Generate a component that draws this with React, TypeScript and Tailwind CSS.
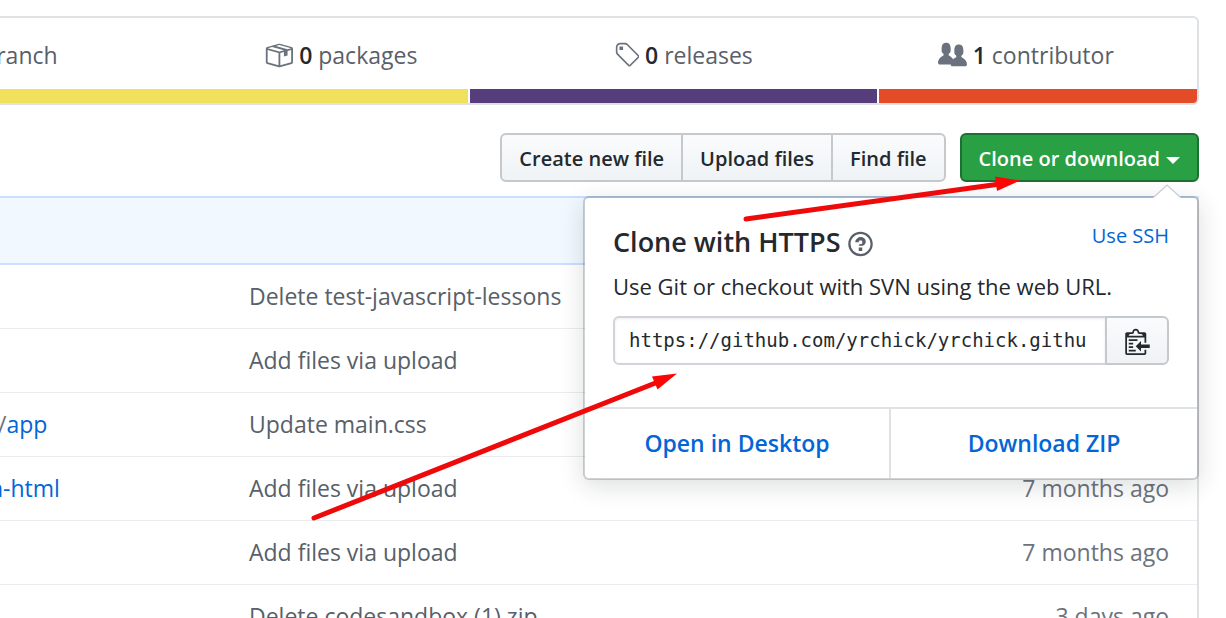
import React from "react";

const octicons = {
  package: {
    box: "0 0 16 16",
    d: "M1 4.27v7.47c0 .45.3.84.75.97l6.5 1.73c.16.05.34.05.5 0l6.5-1.73c.45-.13.75-.52.75-.97V4.27c0-.45-.3-.84-.75-.97l-6.5-1.74a1.4 1.4 0 0 0-.5 0L1.75 3.3c-.45.13-.75.52-.75.97zm7 9.09l-6-1.59V5l6 1.61v6.75zM2 4l2.5-.67L11 5.06l-2.5.67L2 4zm13 7.77l-6 1.59V6.61l2-.55V8.5l2-.53V5.53L15 5v6.77zm-2-7.24L6.5 2.8l2-.53L15 4l-2 .53z",
  },
  branch: {
    box: "0 0 10 16",
    d: "M10 5c0-1.11-.89-2-2-2a1.993 1.993 0 0 0-1 3.72v.3c-.02.52-.23.98-.63 1.38-.4.4-.86.61-1.38.63-.83.02-1.48.16-2 .45V4.72a1.993 1.993 0 0 0-1-3.72C.88 1 0 1.89 0 3a2 2 0 0 0 1 1.72v6.56c-.59.35-1 .99-1 1.72 0 1.11.89 2 2 2 1.11 0 2-.89 2-2 0-.53-.2-1-.53-1.36.09-.06.48-.41.59-.47.25-.11.56-.17.94-.17 1.05-.05 1.95-.45 2.75-1.25S8.95 7.77 9 6.73h-.02C9.59 6.37 10 5.73 10 5z",
  },
  tag: {
    box: "0 0 14 16",
    d: "M7.73 1.73C7.26 1.26 6.62 1 5.96 1H3.5C2.13 1 1 2.13 1 3.5v2.47c0 .66.27 1.3.73 1.77l6.06 6.06c.39.39 1.02.39 1.41 0l4.59-4.59a.996.996 0 0 0 0-1.41L7.73 1.73zM2.38 7.09c-.31-.3-.47-.7-.47-1.13V3.5c0-.88.72-1.59 1.59-1.59h2.47c.42 0 .83.16 1.13.47l6.14 6.13-4.73 4.73-6.13-6.15zM3.01 3h2v2H3V3h.01z",
  },
  people: {
    box: "0 0 16 16",
    d: "M16 12.999c0 .439-.45 1-1 1H7.995c-.539 0-.994-.447-.995-.999H1c-.54 0-1-.561-1-1 0-2.634 3-4 3-4s.229-.409 0-1c-.841-.621-1.058-.59-1-3 .058-2.419 1.367-3 2.5-3s2.442.58 2.5 3c.058 2.41-.159 2.379-1 3-.229.59 0 1 0 1s1.549.711 2.42 2.088C9.196 9.369 10 8.999 10 8.999s.229-.409 0-1c-.841-.62-1.058-.59-1-3 .058-2.419 1.367-3 2.5-3s2.437.581 2.495 3c.059 2.41-.158 2.38-1 3-.229.59 0 1 0 1s3.005 1.366 3.005 4",
  },
  question: {
    box: "0 0 14 16",
    d: "M6 10h2v2H6v-2zm4-3.5C10 8.64 8 9 8 9H6c0-.55.45-1 1-1h.5c.28 0 .5-.22.5-.5v-1c0-.28-.22-.5-.5-.5h-1c-.28 0-.5.22-.5.5V7H4c0-1.5 1.5-3 3-3s3 1 3 2.5zM7 2.3c3.14 0 5.7 2.56 5.7 5.7s-2.56 5.7-5.7 5.7A5.71 5.71 0 0 1 1.3 8c0-3.14 2.56-5.7 5.7-5.7zM7 1C3.14 1 0 4.14 0 8s3.14 7 7 7 7-3.14 7-7-3.14-7-7-7z",
  },
  clippy: {
    box: "0 0 14 16",
    d: "M2 13h4v1H2v-1zm5-6H2v1h5V7zm2 3V8l-3 3 3 3v-2h5v-2H9zM4.5 9H2v1h2.5V9zM2 12h2.5v-1H2v1zm9 1h1v2c-.02.28-.11.52-.3.7-.19.18-.42.28-.7.3H1c-.55 0-1-.45-1-1V4c0-.55.45-1 1-1h3c0-1.11.89-2 2-2 1.11 0 2 .89 2 2h3c.55 0 1 .45 1 1v5h-1V6H1v9h10v-2zM2 5h8c0-.55-.45-1-1-1H8c-.55 0-1-.45-1-1s-.45-1-1-1-1 .45-1 1-.45 1-1 1H3c-.55 0-1 .45-1 1z",
  },
};

function Octicon({ name, className }: { name: keyof typeof octicons; className: string }) {
  return (
    <svg viewBox={octicons[name].box} className={className} fill="currentColor" aria-hidden="true">
      <path fillRule="evenodd" d={octicons[name].d} />
    </svg>
  );
}

const stats: { icon: keyof typeof octicons; count: number; label: string }[] = [
  { icon: "branch", count: 1, label: "branch" },
  { icon: "package", count: 0, label: "packages" },
  { icon: "tag", count: 0, label: "releases" },
  { icon: "people", count: 1, label: "contributor" },
];

const files = [
  { name: "", message: "Delete test-javascript-lessons", age: "" },
  { name: "", message: "Add files via upload", age: "" },
  { name: "app", parent: "/", message: "Update main.css", age: "" },
  { name: "n-html", message: "Add files via upload", age: "7 months ago" },
  { name: "", message: "Add files via upload", age: "7 months ago" },
  { name: "", message: "Delete codesandbox (1).zip", age: "3 days ago" },
];

function Summary() {
  return (
    <section className="overflow-hidden rounded-r-md border-2 border-l-0 border-[#dfe2e5]">
      <ul className="-ml-[173px] grid grid-cols-4">
        {stats.map((s) => (
          <li key={s.label}>
            <a href="#" className="flex h-[71px] items-center justify-center gap-[6px] pt-1 text-[23px] text-[#586069]">
              <Octicon name={s.icon} className="h-[29px] w-auto text-[#6a737d]" />
              <span>
                <span className="font-semibold text-[#24292e]">{s.count}</span> {s.label}
              </span>
            </a>
          </li>
        ))}
      </ul>
      <div className="flex h-[14px] gap-[2px]">
        <span className="grow-[468] bg-[#f1e05a]" />
        <span className="grow-[407] bg-[#563d7c]" />
        <span className="grow-[318] bg-[#e34c26]" />
      </div>
    </section>
  );
}

function ClonePopover() {
  return (
    <div className="absolute top-[63px] right-0 z-10 w-[616px] rounded-md border-2 border-[#1b1f23]/20 bg-white bg-clip-padding font-normal shadow-[0_6px_24px_rgba(27,31,35,0.15)]">
      <svg className="absolute -top-[14px] right-[16px] h-[14px] w-[28px]" viewBox="0 0 28 14" aria-hidden="true">
        <path d="M0 14 14 1 28 14Z" fill="#fff" />
        <path d="M1 13 14 1 27 13" fill="none" stroke="#c9cdd1" strokeWidth="1.2" />
      </svg>
      <div className="px-[28px] pt-6 pb-[42px]">
        <div className="flex items-start justify-between">
          <h4 className="flex h-10 items-center gap-2 text-[27px] font-semibold">
            Clone with HTTPS
            <a href="#" aria-label="Which remote URL should I use?" className="pt-1 text-[#586069]">
              <Octicon name="question" className="h-[28px] w-[25px]" />
            </a>
          </h4>
          <button type="button" className="text-[20px] leading-7 text-[#0366d6]">
            Use SSH
          </button>
        </div>
        <p className="mt-2 text-[22px] leading-8">Use Git or checkout with SVN using the web URL.</p>
        <div className="mt-[14px] flex h-[49px]">
          <input
            type="text"
            readOnly
            aria-label="Clone this repository"
            defaultValue="https://github.com/yrchick/yrchick.githu"
            className="min-w-0 flex-1 rounded-l-md border-2 border-[#d1d5da] px-[14px] font-['DejaVu_Sans_Mono',monospace] text-[19px] shadow-[inset_0_1px_3px_rgba(27,31,35,0.08)] outline-none"
          />
          <button
            type="button"
            aria-label="Copy to clipboard"
            className="-ml-[2px] flex w-[64px] items-center justify-center rounded-r-md border-2 border-[#c6c9cc] bg-linear-to-b from-[#fafbfc] to-[#eff3f6]"
          >
            <Octicon name="clippy" className="h-[28px] w-[25px]" />
          </button>
        </div>
      </div>
      <div className="grid h-[71px] grid-cols-2 border-t-2 border-[#dfe2e5] text-[23px] font-semibold text-[#0366d6]">
        <a href="#" className="flex items-center justify-center border-r-2 border-[#dfe2e5]">
          Open in Desktop
        </a>
        <a href="#" className="flex items-center justify-center">
          Download ZIP
        </a>
      </div>
    </div>
  );
}

function Toolbar() {
  const button =
    "border-2 border-[#c6c9cc] bg-linear-to-b from-[#fafbfc] to-[#eff3f6] px-[17px] pt-[2px] whitespace-nowrap";
  return (
    <div className="relative mt-[28px] flex h-[49px] justify-end gap-[14px] text-[20px] font-semibold">
      <div className="flex">
        <button type="button" className={`${button} rounded-l-md`}>
          Create new file
        </button>
        <button type="button" className={`${button} -ml-[2px]`}>
          Upload files
        </button>
        <button type="button" className={`${button} -ml-[2px] rounded-r-md`}>
          Find file
        </button>
      </div>
      <button
        type="button"
        className="flex items-center gap-[6px] rounded-md border-2 border-[#1f6f33] bg-[#28a043] px-[17px] pt-[2px] whitespace-nowrap text-white"
      >
        Clone or download
        <svg viewBox="0 0 14 7" className="mt-1 h-[7px] w-[14px]" fill="currentColor" aria-hidden="true">
          <path d="M0 0h14L7 7z" />
        </svg>
      </button>
      <ClonePopover />
    </div>
  );
}

function FileTable() {
  return (
    <section className="mt-[14px] border-r-2 border-[#dfe2e5]">
      <div className="h-[69px] border-y-2 border-[#c8e1ff] bg-[#f1f8ff]" />
      <table className="w-full table-fixed border-separate border-spacing-0 text-[23px] text-[#586069]">
        <tbody>
          {files.map((f, i) => (
            <tr key={i} className="h-16">
              <td className="w-[249px] border-b border-[#eaecef] p-0">
                {f.name && (
                  <a href="#" className={f.parent ? "-ml-[2px] text-[#0366d6]" : "-ml-[11px] text-[#0366d6]"}>
                    {f.parent && <span className="text-[#6a737d]">{f.parent}</span>}
                    {f.name}
                  </a>
                )}
              </td>
              <td className="border-b border-[#eaecef] p-0 whitespace-nowrap">{f.message}</td>
              <td className="w-[200px] border-b border-[#eaecef] p-0 pr-[28px] text-right whitespace-nowrap text-[#6a737d]">
                {f.age}
              </td>
            </tr>
          ))}
        </tbody>
      </table>
    </section>
  );
}

function Arrows() {
  return (
    <svg
      className="pointer-events-none absolute top-0 left-0 z-20 h-[618px] w-[1226px]"
      viewBox="0 0 1226 618"
      aria-hidden="true"
    >
      <g stroke="#ee0a0a" strokeWidth="5" strokeLinecap="round">
        <path d="M746 219 1000 184" />
        <path d="M314 518 658 382" />
      </g>
      <g fill="#fb0505">
        <path d="M995 176.500 1020 180.500 997 191Z" />
        <path d="M652 376.500 677 373.500 657.500 389.500Z" />
      </g>
    </svg>
  );
}

export default function App() {
  return (
    <div className="relative h-screen overflow-hidden bg-white font-['Open_Sans','Noto_Sans',sans-serif] text-[#24292e]">
      <main className="pt-4 pr-[27px]">
        <Summary />
        <Toolbar />
        <FileTable />
      </main>
      <Arrows />
    </div>
  );
}
